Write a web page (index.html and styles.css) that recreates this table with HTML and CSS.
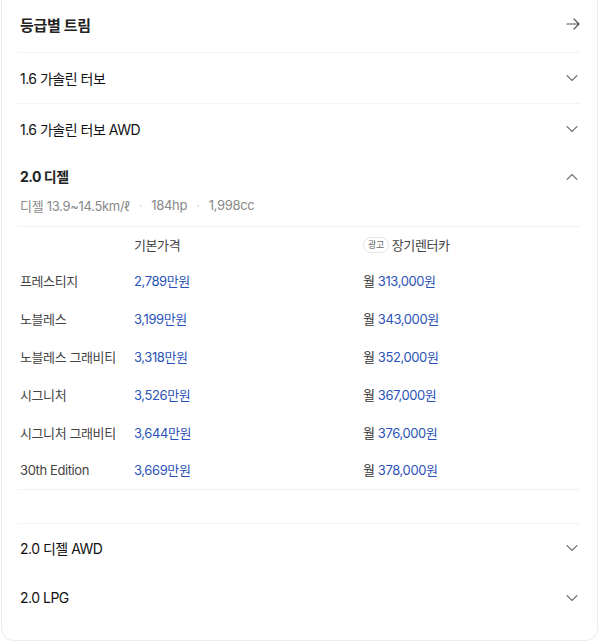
FILE: index.html
```html
<!DOCTYPE html>
<html lang="ko">
<head>
<meta charset="utf-8">
<link rel="stylesheet" href="styles.css">
</head>
<body>
<section class="card">
  <header class="card-head">
    <h2 class="card-title">등급별 트림</h2>
    <svg class="arrow" width="14" height="14" viewBox="0 0 14 14"><path d="M1 7h12M8 2l5 5-5 5" fill="none" stroke="#555" stroke-width="1.2" stroke-linecap="round" stroke-linejoin="round"/></svg>
  </header>

  <div class="item">
    <div class="item-head"><span class="item-name">1.6 가솔린 터보</span><svg class="chev" width="12" height="8" viewBox="0 0 12 8"><path d="M1 1.5l5 5 5-5" fill="none" stroke="#777" stroke-width="1.1" stroke-linecap="round" stroke-linejoin="round"/></svg></div>
  </div>
  <div class="item line">
    <div class="item-head"><span class="item-name">1.6 가솔린 터보 AWD</span><svg class="chev" width="12" height="8" viewBox="0 0 12 8"><path d="M1 1.5l5 5 5-5" fill="none" stroke="#777" stroke-width="1.1" stroke-linecap="round" stroke-linejoin="round"/></svg></div>
  </div>
  <div class="item open">
    <div class="item-head open-head"><span class="item-name bold">2.0 디젤</span><svg class="chev" width="12" height="8" viewBox="0 0 12 8"><path d="M1 6.5l5-5 5 5" fill="none" stroke="#777" stroke-width="1.1" stroke-linecap="round" stroke-linejoin="round"/></svg></div>
    <div class="spec">디젤 13.9~14.5km/ℓ<span class="dot">·</span>184hp<span class="dot">·</span>1,998cc</div>
    <div class="table">
      <div class="row thead">
        <span></span>
        <span class="th">기본가격</span>
        <span class="th"><span class="ad">광고</span>장기렌터카</span>
      </div>
      <div class="row"><span class="name">프레스티지</span><span class="price">2,789만원</span><span class="rent">월 <em>313,000원</em></span></div>
      <div class="row"><span class="name">노블레스</span><span class="price">3,199만원</span><span class="rent">월 <em>343,000원</em></span></div>
      <div class="row"><span class="name">노블레스 그래비티</span><span class="price">3,318만원</span><span class="rent">월 <em>352,000원</em></span></div>
      <div class="row"><span class="name">시그니처</span><span class="price">3,526만원</span><span class="rent">월 <em>367,000원</em></span></div>
      <div class="row"><span class="name">시그니처 그래비티</span><span class="price">3,644만원</span><span class="rent">월 <em>376,000원</em></span></div>
      <div class="row"><span class="name">30th Edition</span><span class="price">3,669만원</span><span class="rent">월 <em>378,000원</em></span></div>
    </div>
  </div>
  <div class="item line">
    <div class="item-head"><span class="item-name">2.0 디젤 AWD</span><svg class="chev" width="12" height="8" viewBox="0 0 12 8"><path d="M1 1.5l5 5 5-5" fill="none" stroke="#777" stroke-width="1.1" stroke-linecap="round" stroke-linejoin="round"/></svg></div>
  </div>
  <div class="item">
    <div class="item-head"><span class="item-name">2.0 LPG</span><svg class="chev" width="12" height="8" viewBox="0 0 12 8"><path d="M1 1.5l5 5 5-5" fill="none" stroke="#777" stroke-width="1.1" stroke-linecap="round" stroke-linejoin="round"/></svg></div>
  </div>
</section>
</body>
</html>
```

FILE: styles.css
```css
* { box-sizing: border-box; }
html, body { margin: 0; padding: 0; background: #fff; }
body {
  font-family: Inter, "Noto Sans CJK KR", sans-serif;
  color: #222;
  padding: 0 2px 3px 1px;
}
.card {
  background: #fff;
  border: 1px solid #ededed;
  border-top: none;
  border-radius: 0 0 13px 13px;
  padding: 0 17px 17px 16px;
}
.card-head {
  height: 53px;
  padding-bottom: 4px;
  display: flex;
  align-items: center;
  justify-content: space-between;
  border-bottom: 1px solid #f4f4f4;
}
.card-title {
  margin: 0;
  font-size: 15px;
  font-weight: 700;
  color: #222;
  padding-left: 2px;
  letter-spacing: -0.3px;
}
.item-head {
  height: 50px;
  display: flex;
  align-items: center;
  justify-content: space-between;
  padding-right: 2px;
}
.item.line .item-head { border-top: 1px solid #f4f4f4; }
.item-name {
  font-size: 14px;
  font-weight: 400;
  color: #111;
  padding-left: 2px;
  letter-spacing: -0.5px;
}
.item-name.bold { font-weight: 700; color: #222; }
.open-head {
  height: 40px;
  align-items: flex-start;
  padding-top: 14px;
  line-height: 20px;
}
.open-head .chev { margin-top: 6px; }
.spec {
  font-size: 13px;
  color: #888;
  padding-left: 2px;
  height: 24px;
  display: flex;
  align-items: center;
  letter-spacing: -0.3px;
}
.dot { color: #ccc; margin: 0 9px; }
.table {
  border-top: 1px solid #f1f1f1;
  border-bottom: 1px solid #f1f1f1;
  margin-top: 9px;
  margin-bottom: 33px;
}
.row {
  display: grid;
  grid-template-columns: 116px 229px 1fr;
  height: 37.8px;
  align-items: center;
  font-size: 13px;
  letter-spacing: -0.4px;
}
.thead { height: 35px; }
.th { color: #444; display: flex; align-items: center; }
.ad {
  display: inline-flex;
  align-items: center;
  height: 16px;
  padding: 0 4px;
  border: 1px solid #e4e4e4;
  border-radius: 8px;
  font-size: 9px;
  color: #666;
  margin-right: 3px;
}
.name { color: #444; padding-left: 2px; }
.price { color: #2b52b8; }
.rent { color: #333; }
.rent em { font-style: normal; color: #2b52b8; }
```
